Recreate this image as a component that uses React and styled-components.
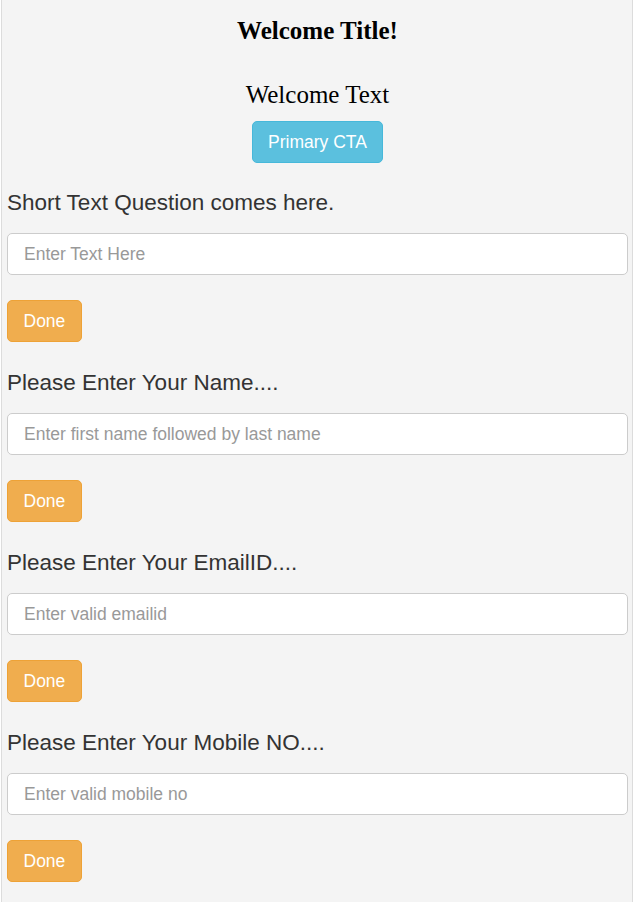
import React from 'react';
import styled, { createGlobalStyle, css } from 'styled-components';

const GlobalStyle = createGlobalStyle`
    html, body {
        margin: 0;
        padding: 0;
        background-color: #ffffff;
    }
    * {
        box-sizing: border-box;
    }
`;

const Page = styled.div`
    display: flex;
    flex-direction: column;
    min-height: 100vh;
    margin: 0 1px;
    padding: 17px 4px 0 5px;
    background-color: #f4f4f4;
    border-left: 1px solid #dcdcdc;
    border-right: 1px solid #dcdcdc;
    font-family: "Liberation Sans", Arial, sans-serif;
`;

const Header = styled.div`
    display: flex;
    flex-direction: column;
    align-items: center;
`;

const Title = styled.h2`
    margin: 0;
    font-family: "Liberation Serif", "Times New Roman", serif;
    font-size: 25px;
    font-weight: bold;
    line-height: 28px;
    color: #000000;
`;

const Intro = styled.p`
    margin: 36px 0 12px 0;
    font-family: "Liberation Serif", "Times New Roman", serif;
    font-size: 25px;
    line-height: 28px;
    color: #000000;
`;

const variants = {
    info: css`
        background-color: #5bc0de;
        border-color: #46b8da;
    `,
    warning: css`
        background-color: #f0ad4e;
        border-color: #eea236;
    `,
};

const Button = styled.button`
    height: 42px;
    padding: 0 15.5px;
    border: 1px solid;
    border-radius: 5px;
    font-family: "Liberation Sans", Arial, sans-serif;
    font-size: 17.5px;
    line-height: 40px;
    color: #ffffff;
    cursor: pointer;
    ${(p) => variants[p.$variant]}
`;

const Form = styled.div`
    display: flex;
    flex-direction: column;
    padding-top: 27px;
`;

const Question = styled.div`
    display: flex;
    flex-direction: column;
    align-items: flex-start;
    margin-bottom: 28px;
`;

const QuestionLabel = styled.label`
    font-size: 22.5px;
    line-height: 26px;
    color: #333333;
    margin-bottom: 17px;
`;

const TextInput = styled.input`
    width: 100%;
    height: 42px;
    padding: 0 16px;
    margin-bottom: 25px;
    border: 1px solid #cccccc;
    border-radius: 5px;
    background-color: #ffffff;
    font-family: "Liberation Sans", Arial, sans-serif;
    font-size: 17.5px;
    color: #555555;
    outline: none;
    &::placeholder {
        color: #999999;
    }
`;

const questions = [
    { id: "short", label: "Short Text Question comes here.", placeholder: "Enter Text Here" },
    { id: "name", label: "Please Enter Your Name....", placeholder: "Enter first name followed by last name" },
    { id: "email", label: "Please Enter Your EmailID....", placeholder: "Enter valid emailid" },
    { id: "mobile", label: "Please Enter Your Mobile NO....", placeholder: "Enter valid mobile no" },
];

function App() {
    const [values, setValues] = React.useState({});
    const onChange = (id) => (event) => {
        setValues({ ...values, [id]: event.target.value });
    };

    return (
        <>
            <GlobalStyle />
            <Page>
                <Header>
                    <Title>Welcome Title!</Title>
                    <Intro>Welcome Text</Intro>
                    <Button $variant="info">Primary CTA</Button>
                </Header>
                <Form>
                    {questions.map((q) => (
                        <Question key={q.id}>
                            <QuestionLabel htmlFor={q.id}>{q.label}</QuestionLabel>
                            <TextInput
                                id={q.id}
                                type="text"
                                value={values[q.id] || ""}
                                onChange={onChange(q.id)}
                                placeholder={q.placeholder}
                            />
                            <Button $variant="warning">Done</Button>
                        </Question>
                    ))}
                </Form>
            </Page>
        </>
    );
}

export default App;
